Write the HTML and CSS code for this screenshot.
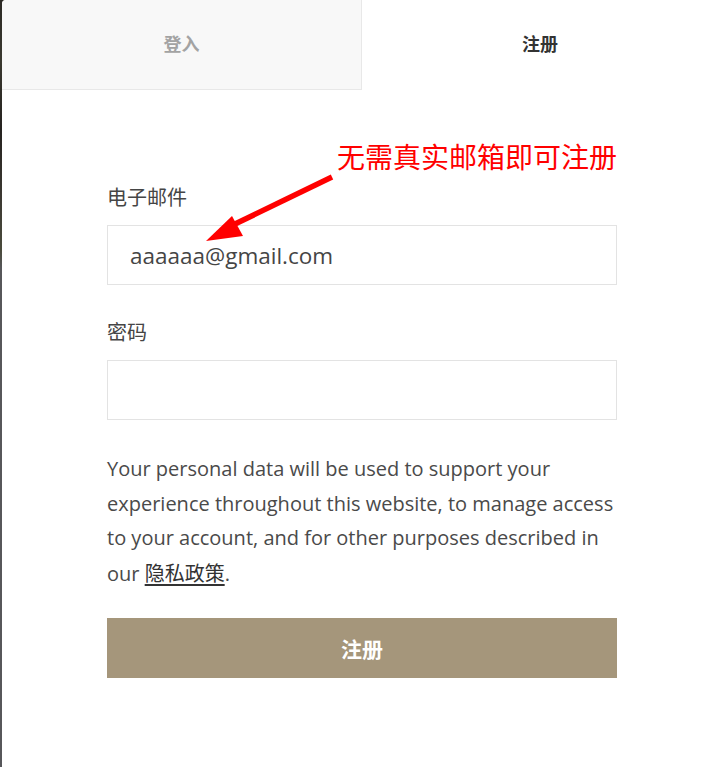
FILE: index.html
```html
<!DOCTYPE html>
<html lang="zh-CN">
<head>
<meta charset="utf-8">
<title>注册</title>
<link rel="stylesheet" href="styles.css">
</head>
<body>
<div class="panel">
  <div class="tabs">
    <div class="tab tab-inactive">登入</div>
    <div class="tab tab-active">注册</div>
  </div>
  <form class="form">
    <div class="field">
      <label class="label">电子邮件</label>
      <div class="input"><span class="input-value">aaaaaa@gmail.com</span></div>
    </div>
    <div class="field">
      <label class="label">密码</label>
      <div class="input"></div>
    </div>
    <p class="privacy">Your personal data will be used to support your experience throughout this website, to manage access to your account, and for other purposes described in our <a class="privacy-link" href="#">隐私政策</a>.</p>
    <div class="submit">注册</div>
  </form>
  <div class="note">无需真实邮箱即可注册</div>
  <svg class="arrow" width="140" height="80" viewBox="0 0 140 80">
    <line x1="129" y1="3" x2="32" y2="50" stroke="#ff0000" stroke-width="5.5"/>
    <polygon points="3,67 29,42 40,62" fill="#ff0000"/>
  </svg>
</div>
</body>
</html>
```
FILE: styles.css
```css
html, body {
  margin: 0;
  padding: 0;
}
body {
  width: 718px;
  height: 767px;
  overflow: hidden;
  background: linear-gradient(180deg, #2c2a25 0px, #3a3930 60px, #262320 130px, #3d3a33 200px, #4a4b3c 250px, #57575a 268px, #57575a 100%);
  font-family: "Open Sans", "Noto Sans CJK SC", sans-serif;
}
.panel {
  position: relative;
  margin-left: 2px;
  height: 767px;
  background: #ffffff;
  border-top-left-radius: 4px;
  overflow: hidden;
}
.tabs {
  display: flex;
  height: 90px;
}
.tab {
  flex: 0 0 auto;
  display: flex;
  align-items: center;
  justify-content: center;
  font-family: "Noto Sans CJK SC", sans-serif;
  font-weight: 700;
  font-size: 18px;
  padding-bottom: 3px;
  box-sizing: border-box;
}
.tab-inactive {
  width: 360px;
  height: 90px;
  background: #f8f8f8;
  color: #a3a3a3;
  border-right: 1px solid #e8e8e8;
  border-bottom: 1px solid #e8e8e8;
}
.tab-active {
  flex: 1 1 auto;
  color: #333333;
  padding-bottom: 5px;
}
.form {
  width: 510px;
  margin: 0 0 0 105px;
  padding-top: 89px;
}
.field {
  display: flex;
  flex-direction: column;
  margin-bottom: 29px;
}
.label {
  font-family: "Noto Sans CJK SC", sans-serif;
  font-size: 20px;
  line-height: 36px;
  color: #454545;
  margin-bottom: 10px;
}
.input {
  box-sizing: border-box;
  height: 60px;
  border: 1px solid #e3e3e3;
  display: flex;
  align-items: center;
  padding-left: 22px;
}
.input-value {
  font-family: "Open Sans", sans-serif;
  font-size: 22.5px;
  color: #454545;
}
.privacy {
  margin: 32px 0 26px 0;
  font-size: 20px;
  line-height: 34.7px;
  color: #4a4a4a;
}
.privacy-link {
  color: #333333;
  text-decoration: underline;
  text-underline-offset: 3px;
  font-family: "Noto Sans CJK SC", sans-serif;
}
.submit {
  height: 60px;
  background: #a5967b;
  color: #ffffff;
  display: flex;
  align-items: center;
  justify-content: center;
  font-family: "Noto Sans CJK SC", sans-serif;
  font-weight: 700;
  font-size: 21px;
}
.note {
  position: absolute;
  left: 335px;
  top: 136px;
  font-family: "Noto Sans CJK SC", sans-serif;
  font-size: 28px;
  line-height: 40px;
  color: #ff0000;
}
.arrow {
  position: absolute;
  left: 201px;
  top: 174px;
}
```
